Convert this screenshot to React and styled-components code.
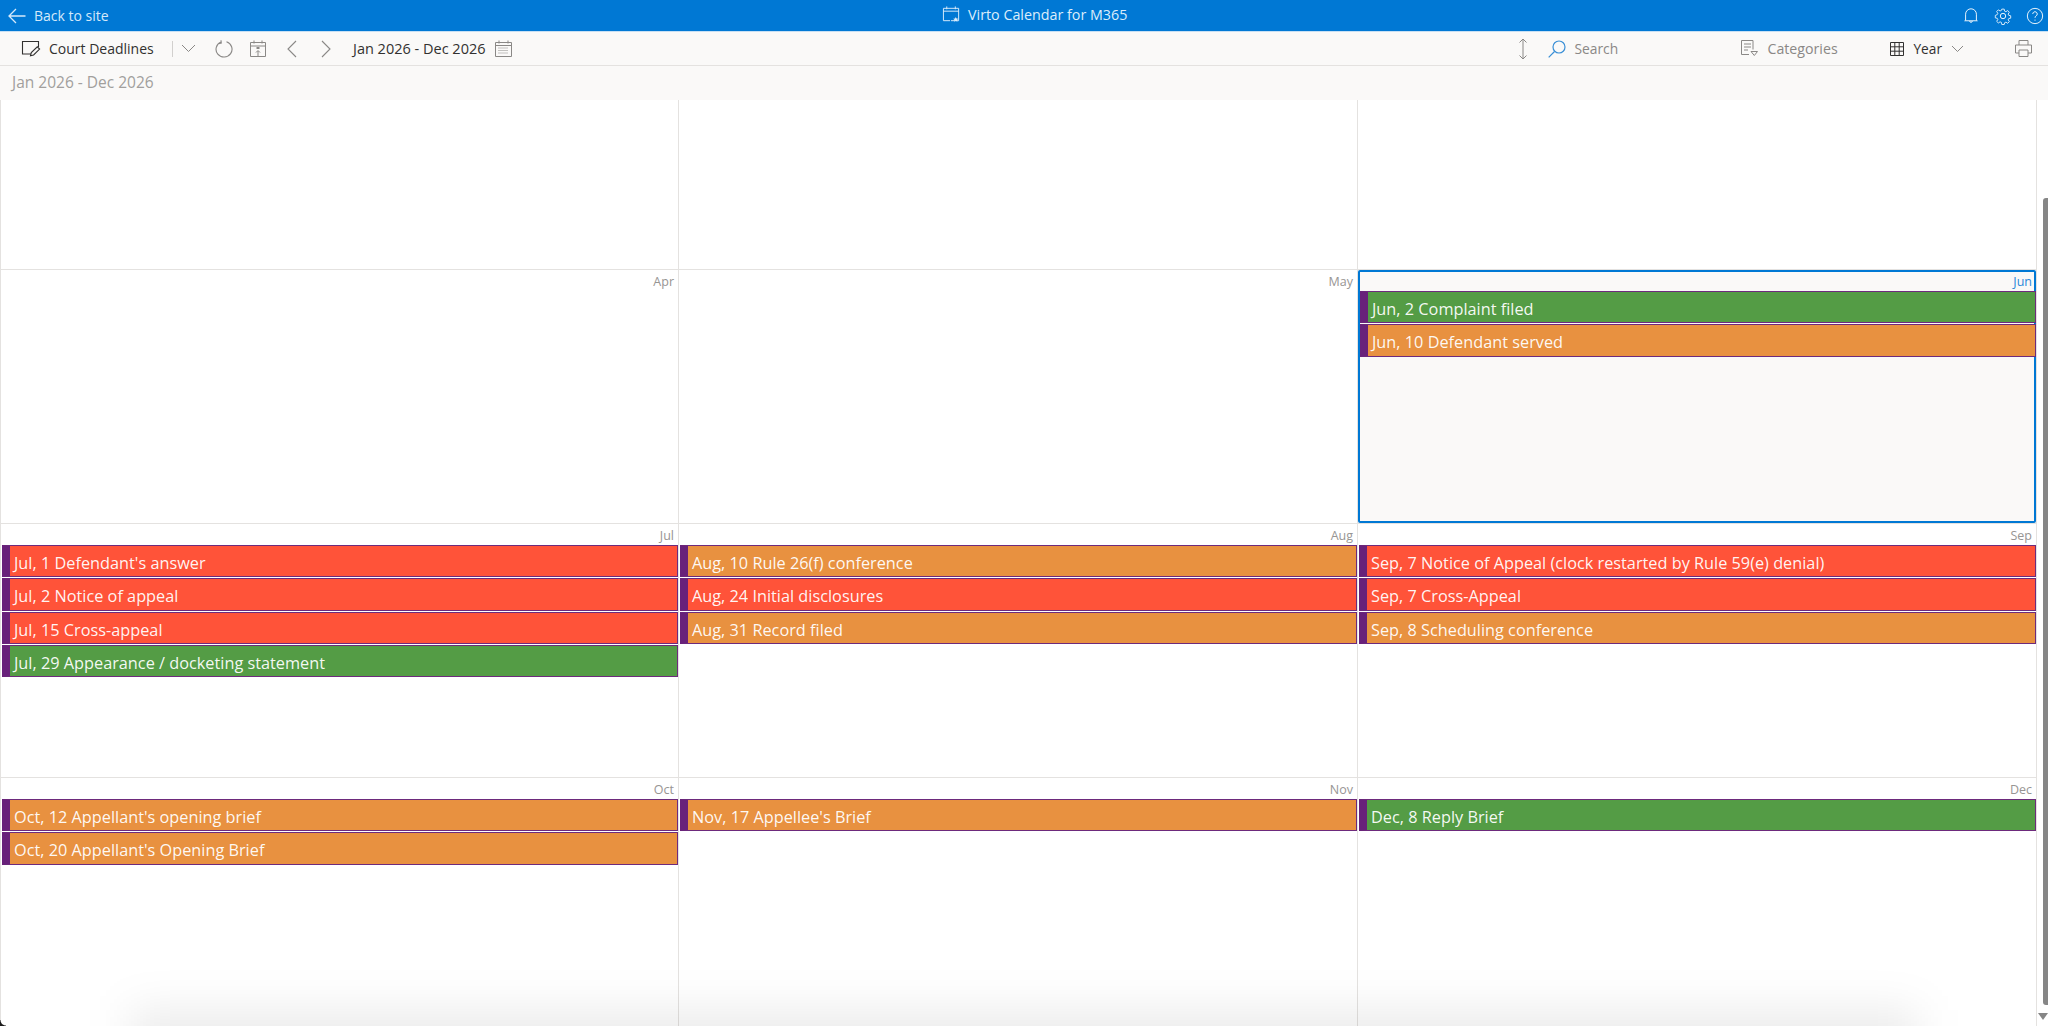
import React from "react";
import styled, { createGlobalStyle } from "styled-components";

const GlobalStyle = createGlobalStyle`
    html, body {
        margin: 0;
        padding: 0;
        height: 100%;
        overflow: hidden;
        background: #fff;
    }
    * { box-sizing: border-box; }
`;

const COLORS = { red: "#ff5339", orange: "#e89140", green: "#549c45" };

const rows = [
    { height: 170, cells: [{ month: "" }, { month: "" }, { month: "" }] },
    {
        height: 254,
        cells: [
            { month: "Apr" },
            { month: "May" },
            {
                month: "Jun",
                selected: true,
                events: [
                    { date: "Jun, 2", title: "Complaint filed", color: "green" },
                    { date: "Jun, 10", title: "Defendant served", color: "orange" },
                ],
            },
        ],
    },
    {
        height: 254,
        cells: [
            {
                month: "Jul",
                events: [
                    { date: "Jul, 1", title: "Defendant's answer", color: "red" },
                    { date: "Jul, 2", title: "Notice of appeal", color: "red" },
                    { date: "Jul, 15", title: "Cross-appeal", color: "red" },
                    { date: "Jul, 29", title: "Appearance / docketing statement", color: "green" },
                ],
            },
            {
                month: "Aug",
                events: [
                    { date: "Aug, 10", title: "Rule 26(f) conference", color: "orange" },
                    { date: "Aug, 24", title: "Initial disclosures", color: "red" },
                    { date: "Aug, 31", title: "Record filed", color: "orange" },
                ],
            },
            {
                month: "Sep",
                events: [
                    { date: "Sep, 7", title: "Notice of Appeal (clock restarted by Rule 59(e) denial)", color: "red" },
                    { date: "Sep, 7", title: "Cross-Appeal", color: "red" },
                    { date: "Sep, 8", title: "Scheduling conference", color: "orange" },
                ],
            },
        ],
    },
    {
        height: 254,
        cells: [
            {
                month: "Oct",
                events: [
                    { date: "Oct, 12", title: "Appellant's opening brief", color: "orange" },
                    { date: "Oct, 20", title: "Appellant's Opening Brief", color: "orange" },
                ],
            },
            { month: "Nov", events: [{ date: "Nov, 17", title: "Appellee's Brief", color: "orange" }] },
            { month: "Dec", events: [{ date: "Dec, 8", title: "Reply Brief", color: "green" }] },
        ],
    },
];

const Icon = ({ size = 20, children }) => (
    <svg width={size} height={size} viewBox="0 0 20 20" fill="none" stroke="currentColor" strokeWidth="1">
        {children}
    </svg>
);

const App = () => {
    return (
        <Page>
            <GlobalStyle />
            <TopBar>
                <BackLink>
                    <svg width="18" height="16" viewBox="0 0 18 16" fill="none" stroke="currentColor" strokeWidth="1.3">
                        <path d="M8 1 1 8l7 7M1 8h16.500" />
                    </svg>
                    <span>Back to site</span>
                </BackLink>
                <AppTitle>
                    <Icon size={19}>
                        <path d="M1.500 3.500h16v13h-8M1.500 3.500v13h7M1.500 6.500h16M5 1.500v3M14 1.500v3" />
                        <path d="m14.500 12.500.8 1.800 1.900.2-1.400 1.300.4 1.900-1.700-1-1.700 1 .4-1.900-1.400-1.300 1.900-.2z" fill="currentColor" stroke="none" />
                    </Icon>
                    <span>Virto Calendar for M365</span>
                </AppTitle>
                <TopActions>
                    <Icon size={18}>
                        <path d="M4 14.500V8a6 6 0 0 1 12 0v6.500l1 .8H3zM8.500 15.500a1.500 1.500 0 0 0 3 0" />
                    </Icon>
                    <Icon size={18}>
                        <circle cx="10" cy="10" r="3" />
                        <path d="M8.500 1.500h3l.5 2.500 1.600.7 2.200-1.400 2 2.100-1.400 2.200.7 1.600 2.400.5v3l-2.400.5-.7 1.600 1.400 2.200-2 2-2.200-1.400-1.600.7-.5 2.200h-3L8 17.900l-1.600-.7-2.200 1.400-2-2 1.400-2.200-.7-1.600-2.400-.5v-3L2.900 8.300l.7-1.600-1.400-2.200 2-2.100 2.200 1.400L8 3.100z" transform="translate(1 1) scale(.9)" />
                    </Icon>
                    <Icon size={18}>
                        <circle cx="10" cy="10" r="8.500" />
                        <path d="M7.500 7.800a2.500 2.500 0 1 1 3.800 2.100c-.9.600-1.300 1-1.300 2.100M10 14v1.200" />
                    </Icon>
                </TopActions>
            </TopBar>

            <Toolbar>
                <CalendarName>
                    <DarkIcon>
                        <svg width="20" height="17" viewBox="0 0 20 17" fill="none" stroke="currentColor" strokeWidth="1.1">
                            <path d="M10 14H1.500V1.500h16V7" />
                            <path d="m9.500 15.800.8-3.200 6-5.800 2.300 2.300-6 5.900z" />
                        </svg>
                    </DarkIcon>
                    <span>Court Deadlines</span>
                </CalendarName>
                <Divider />
                <ToolIcon $ml={8}>
                    <svg width="15" height="9" viewBox="0 0 15 9" fill="none" stroke="currentColor">
                        <path d="m1 1 6.500 6.500L14 1" />
                    </svg>
                </ToolIcon>
                <ToolIcon $ml={19}>
                    <svg width="18" height="18" viewBox="0 0 18 18" fill="none" stroke="currentColor" strokeWidth="1.1">
                        <path d="M6 2a8 7.800 0 1 0 5.500-.2M6 .3l.3 2.700-2.700.7" />
                    </svg>
                </ToolIcon>
                <ToolIcon $ml={17}>
                    <svg width="16" height="18" viewBox="0 0 16 18" fill="none" stroke="currentColor">
                        <path d="M.500 2.500h15v14H.500zM.500 6h15M4 .5v3M12 .5v3M8 16v-5M6 12.500l2-2 2 2" />
                        <path d="M6.500 8h3" strokeWidth="2" />
                    </svg>
                </ToolIcon>
                <ToolIcon $ml={20}>
                    <svg width="11" height="18" viewBox="0 0 11 18" fill="none" stroke="currentColor" strokeWidth="1.1">
                        <path d="M10 1 2 9l8 8" />
                    </svg>
                </ToolIcon>
                <ToolIcon $ml={24}>
                    <svg width="11" height="18" viewBox="0 0 11 18" fill="none" stroke="currentColor" strokeWidth="1.1">
                        <path d="m1 1 8 8-8 8" />
                    </svg>
                </ToolIcon>
                <DateRange>Jan 2026 - Dec 2026</DateRange>
                <ToolIcon $ml={9}>
                    <svg width="17" height="17" viewBox="0 0 17 17" fill="none" stroke="currentColor">
                        <path d="M.500 2.500h16v14H.500zM.500 5.500h16M4 .5v3M13 .5v3" />
                        <path d="M3.500 8h10M3.500 10.500h10M3.500 13h10" strokeDasharray="1 1" />
                    </svg>
                </ToolIcon>

                <ToolSpacer />

                <ToolIcon>
                    <svg width="10" height="22" viewBox="0 0 10 22" fill="none" stroke="currentColor">
                        <path d="M5 1v20M1.500 4.500 5 1l3.500 3.500M1.500 17.500 5 21l3.500-3.500" />
                    </svg>
                </ToolIcon>
                <SearchIcon>
                    <svg width="18" height="18" viewBox="0 0 18 18" fill="none" stroke="currentColor" strokeWidth="1.2">
                        <circle cx="11" cy="7" r="6" />
                        <path d="M6.500 11.500 .7 17.300" />
                    </svg>
                </SearchIcon>
                <SearchText>Search</SearchText>
                <CategoriesBox>
                    <svg width="17" height="17" viewBox="0 0 17 17" fill="none" stroke="currentColor">
                        <path d="M8 14.500H.500V.5h11.500v9M3 4h7M3 7h7M3 10h4" />
                        <path d="M10 11.500h6.500l-3.200 4z" />
                    </svg>
                    <span>Categories</span>
                </CategoriesBox>
                <ViewSwitch>
                    <svg width="14" height="14" viewBox="0 0 14 14" fill="none" stroke="currentColor">
                        <path d="M.500 .5h13v13H.500zM.500 4.800h13M.500 9.200h13M4.800 .5v13M9.200 .5v13" />
                    </svg>
                    <span>Year</span>
                    <ViewCaret>
                        <svg width="13" height="8" viewBox="0 0 13 8" fill="none" stroke="currentColor">
                            <path d="m1 1 5.500 5.500L12 1" />
                        </svg>
                    </ViewCaret>
                </ViewSwitch>
                <PrintIcon>
                    <svg width="17" height="17" viewBox="0 0 17 17" fill="none" stroke="currentColor">
                        <path d="M4 5V.5h9V5M4 13H.500V5h16v8H13M4 10h9v6.500H4z" />
                    </svg>
                </PrintIcon>
            </Toolbar>

            <RangeBar>Jan 2026 - Dec 2026</RangeBar>

            <Body>
                <Grid>
                    {rows.map((row, r) => (
                        <Row key={r} $height={row.height}>
                            {row.cells.map((cell, c) => (
                                <Cell key={c} $selected={cell.selected}>
                                    <MonthLabel $selected={cell.selected}>{cell.month}</MonthLabel>
                                    {(cell.events || []).map((ev) => (
                                        <Event key={ev.date + ev.title} $color={COLORS[ev.color]}>
                                            {ev.date} {ev.title}
                                        </Event>
                                    ))}
                                </Cell>
                            ))}
                        </Row>
                    ))}
                </Grid>
                <ScrollTrack>
                    <ScrollThumb />
                    <ScrollArrow />
                </ScrollTrack>
                <BottomShadow />
                <WindowCorner />
            </Body>
        </Page>
    );
};

export default App;

const Page = styled.div`
    width: 100%;
    height: 100vh;
    display: flex;
    flex-direction: column;
    overflow: hidden;
    font-family: "Open Sans", "Noto Sans", sans-serif;
    background: #fff;
`;

const TopBar = styled.header`
    height: 31px;
    flex: none;
    background: #0078d4;
    color: #fff;
    display: flex;
    align-items: center;
    position: relative;
    padding: 0 4px 0 8px;
`;

const BackLink = styled.div`
    display: flex;
    align-items: center;
    gap: 8px;
    font-size: 14px;
    color: #d5e9fa;
`;

const AppTitle = styled.div`
    position: absolute;
    left: 942px;
    top: 5px;
    display: flex;
    align-items: center;
    gap: 7px;
    font-size: 14.300px;
    color: #dcedfb;
`;

const TopActions = styled.div`
    margin-left: auto;
    display: flex;
    align-items: center;
    gap: 14px;
`;

const Toolbar = styled.div`
    height: 35px;
    flex: none;
    display: flex;
    align-items: center;
    background: #faf9f8;
    border-top: 1px solid #c7e0f4;
    border-bottom: 1px solid #e4e2e0;
    padding: 0 16px 0 21px;
    color: #8a8886;
`;

const CalendarName = styled.div`
    display: flex;
    align-items: center;
    gap: 8px;
    font-size: 14px;
    color: #323130;
    width: 151px;
`;

const DarkIcon = styled.span`
    display: flex;
    color: #323130;
`;

const Divider = styled.div`
    width: 1px;
    height: 16px;
    background: #d2d0ce;
`;

const ToolIcon = styled.span`
    display: flex;
    margin-left: ${(p) => p.$ml || 0}px;
    color: #8a8886;
`;

const DateRange = styled.span`
    margin-left: 21px;
    font-size: 14.500px;
    color: #323130;
`;

const ToolSpacer = styled.div`
    flex: 1;
`;

const SearchIcon = styled.span`
    display: flex;
    margin-left: 20px;
    color: #3a8fd6;
`;

const SearchText = styled.span`
    margin-left: 8px;
    width: 167px;
    font-size: 13.800px;
    color: #8a8886;
`;

const CategoriesBox = styled.div`
    display: flex;
    align-items: center;
    gap: 9px;
    width: 149px;
    font-size: 14.200px;
    color: #8a8886;
`;

const ViewSwitch = styled.div`
    display: flex;
    align-items: center;
    gap: 9px;
    font-size: 13.700px;
    color: #323130;
`;

const ViewCaret = styled.span`
    display: flex;
    color: #8a8886;
`;

const PrintIcon = styled.span`
    display: flex;
    margin-left: 51px;
    color: #8a8886;
`;

const RangeBar = styled.div`
    height: 34px;
    flex: none;
    background: #faf9f8;
    padding: 0 12px 2px;
    display: flex;
    align-items: center;
    font-size: 15.500px;
    color: #a19f9d;
`;

const Body = styled.main`
    flex: 1;
    min-height: 0;
    display: flex;
    position: relative;
    overflow: hidden;
`;

const Grid = styled.div`
    width: 2037px;
    flex: none;
    border-left: 1px solid #e4e2e0;
    border-right: 1px solid #e4e2e0;
`;

const Row = styled.div`
    height: ${(p) => p.$height}px;
    display: grid;
    grid-template-columns: 678px 679px 678px;
    border-bottom: 1px solid #e4e2e0;
`;

const Cell = styled.div`
    position: relative;
    display: flex;
    flex-direction: column;
    gap: 1px;
    padding: ${(p) => (p.$selected ? "0 0 0 2px" : "0 0 0 1px")};
    background: ${(p) => (p.$selected ? "#faf9f8" : "#fff")};
    border-right: ${(p) => (p.$selected ? "0" : "1px solid #e4e2e0")};
    box-shadow: ${(p) => (p.$selected ? "inset 0 0 0 2px #0078d4" : "none")};
    border-radius: ${(p) => (p.$selected ? "2px" : "0")};
    &:last-child { border-right: 0; }
`;

const MonthLabel = styled.div`
    height: 20px;
    flex: none;
    text-align: right;
    padding: 5px 4px 0 0;
    font-size: 12.500px;
    line-height: 14px;
    color: ${(p) => (p.$selected ? "#2b88d8" : "#979593")};
`;

const Event = styled.div`
    height: 32.300px;
    flex: none;
    background: ${(p) => p.$color};
    border: 1px solid #6d2a7c;
    border-left: 8px solid #68217a;
    padding: 0 0 0 4px;
    color: rgba(255, 255, 255, 0.94);
    font-size: 16.300px;
    line-height: 35px;
    white-space: nowrap;
    overflow: hidden;
`;

const ScrollTrack = styled.div`
    flex: 1;
    position: relative;
    background: #fff;
`;

const ScrollThumb = styled.div`
    position: absolute;
    right: 0;
    top: 98px;
    width: 5px;
    height: 807px;
    background: #868686;
    border-radius: 3px 0 0 3px;
`;

const ScrollArrow = styled.div`
    position: absolute;
    right: 0;
    bottom: 6px;
    width: 0;
    height: 0;
    border-left: 5px solid transparent;
    border-right: 5px solid transparent;
    border-top: 7px solid #868686;
`;

const BottomShadow = styled.div`
    position: absolute;
    left: 130px;
    right: 130px;
    bottom: -40px;
    height: 56px;
    background: rgba(0, 0, 0, 0.08);
    filter: blur(22px);
    pointer-events: none;
`;

const WindowCorner = styled.div`
    position: absolute;
    left: 0;
    bottom: 0;
    width: 6px;
    height: 6px;
    background: radial-gradient(circle at 100% 0, transparent 5px, #1c1c1c 6px);
    pointer-events: none;
`;
